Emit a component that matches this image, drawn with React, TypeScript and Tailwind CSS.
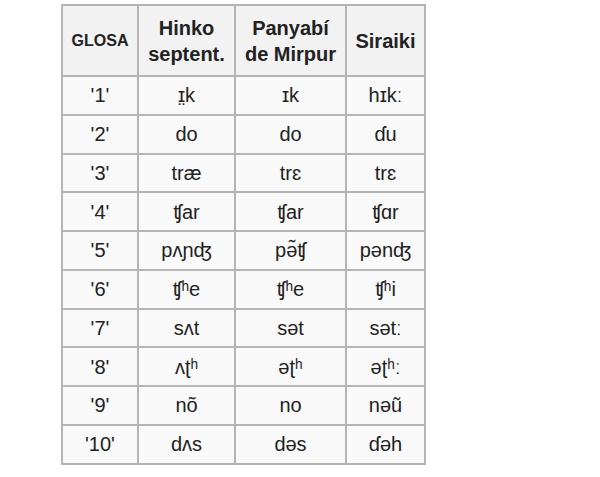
import React from 'react';

const rows: [string, string, string, string][] = [
  ["'1'", 'ɪ̤k', 'ɪk', 'hɪkː'],
  ["'2'", 'do', 'do', 'ɗu'],
  ["'3'", 'træ', 'trɛ', 'trɛ'],
  ["'4'", 'ʧar', 'ʧar', 'ʧɑr'],
  ["'5'", 'pʌɲʤ', 'pə̃ʧ', 'pənʤ'],
  ["'6'", 'ʧʰe', 'ʧʰe', 'ʧʰi'],
  ["'7'", 'sʌt', 'sət', 'sətː'],
  ["'8'", 'ʌʈʰ', 'əʈʰ', 'əʈʰː'],
  ["'9'", 'nõ', 'no', 'nəũ'],
  ["'10'", 'dʌs', 'dəs', 'ɗəh'],
];

const cell = 'border-r-2 border-b-2 border-[#b4b4b4] text-center align-middle p-0';

export default function App() {
  return (
    <div
      className="w-[600px] h-[477px] bg-white pt-[4px] pl-[61px] text-[#222]"
      style={{ fontFamily: '"Liberation Sans", "DejaVu Sans", Arial, sans-serif' }}
    >
      <table className="border-separate border-spacing-0 border-l-2 border-t-2 border-[#b4b4b4] table-fixed w-[363px]">
        <colgroup>
          <col className="w-[76px]" />
          <col className="w-[97px]" />
          <col className="w-[111px]" />
          <col className="w-[79px]" />
        </colgroup>
        <thead>
          <tr className="bg-[#f2f2f2] h-[71px]">
            <th className={`${cell} text-[16px] font-bold`}>GLOSA</th>
            <th className={`${cell} text-[20px] font-bold leading-[26px]`}>
              Hinko
              <br />
              septent.
            </th>
            <th className={`${cell} text-[20px] font-bold leading-[26px]`}>
              Panyabí
              <br />
              de Mirpur
            </th>
            <th className={`${cell} text-[20px] font-bold`}>Siraiki</th>
          </tr>
        </thead>
        <tbody>
          {rows.map((r, i) => (
            <tr key={i} className="bg-[#f9f9f9] h-[38.75px]">
              {r.map((v, j) => (
                <td key={j} className={`${cell} text-[20px]`}>
                  {v}
                </td>
              ))}
            </tr>
          ))}
        </tbody>
      </table>
    </div>
  );
}
